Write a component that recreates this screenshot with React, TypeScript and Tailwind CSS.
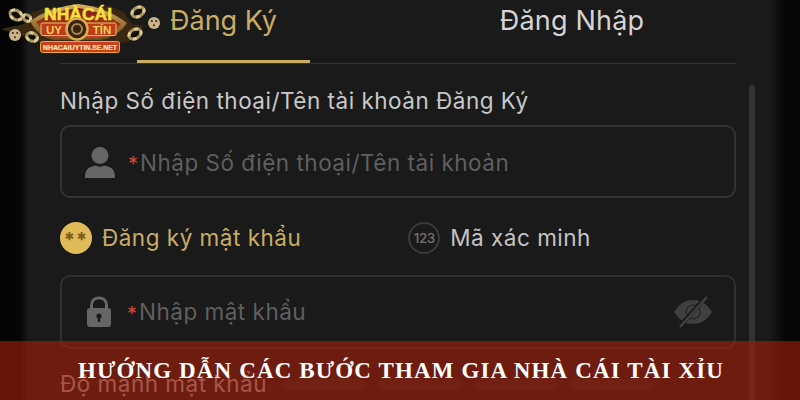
import React from "react";

function UserIcon() {
  return (
    <svg width="32" height="32" viewBox="0 0 32 32" className="shrink-0">
      <circle cx="16" cy="9.5" r="8.5" fill="#666666" />
      <path d="M1 32 C1 25 3 22 8 20.5 L12 19.5 C14 21 18 21 20 19.5 L24 20.5 C29 22 31 25 31 32 Z" fill="#666666" />
    </svg>
  );
}

function LockIcon() {
  return (
    <svg width="26" height="32" viewBox="0 0 26 32" className="shrink-0">
      <path d="M5.5 13 V9 C5.5 4.5 8.5 2 13 2 C17.5 2 20.5 4.5 20.5 9 V13" fill="none" stroke="#666666" strokeWidth="3" />
      <rect x="1" y="12" width="24" height="19" rx="3" fill="#666666" />
      <circle cx="13" cy="20" r="2.6" fill="#1a1a1a" />
      <rect x="11.8" y="20" width="2.4" height="6" fill="#1a1a1a" />
    </svg>
  );
}

function EyeOffIcon() {
  return (
    <svg width="40" height="32" viewBox="0 0 40 32" className="shrink-0">
      <path d="M1 16 C7 7 13 4 20 4 C27 4 33 7 39 16 C33 25 27 28 20 28 C13 28 7 25 1 16 Z" fill="#404040" />
      <circle cx="20" cy="16" r="7" fill="none" stroke="#2a2a2a" strokeWidth="1.5" />
      <path d="M33 1 L6 31" stroke="#1a1a1a" strokeWidth="4.5" />
      <path d="M34 1 L7 31" stroke="#404040" strokeWidth="2.5" />
    </svg>
  );
}

function Chip({ cx, cy, rx, ry, a }: { cx: number; cy: number; rx: number; ry: number; a: number }) {
  return (
    <g transform={`rotate(${a} ${cx} ${cy})`}>
      <ellipse cx={cx} cy={cy} rx={rx} ry={ry} fill="#141008" stroke="#a8955f" strokeWidth="3" />
      <ellipse cx={cx} cy={cy} rx={rx} ry={ry} fill="none" stroke="#dccb95" strokeWidth="3" strokeDasharray="4 5" />
    </g>
  );
}

function Die({ cx, cy }: { cx: number; cy: number }) {
  return (
    <g>
      <circle cx={cx} cy={cy} r="6" fill="#c9b48a" />
      <circle cx={cx - 2.2} cy={cy - 2} r="1" fill="#3a2410" />
      <circle cx={cx + 2.2} cy={cy - 2} r="1" fill="#3a2410" />
      <circle cx={cx} cy={cy + 2.2} r="1" fill="#3a2410" />
    </g>
  );
}

function Logo() {
  return (
    <svg width="164" height="56" viewBox="0 0 164 56">
      <defs>
        <linearGradient id="gold" x1="0" y1="0" x2="0" y2="1">
          <stop offset="0" stopColor="#d8b060" />
          <stop offset="1" stopColor="#6e4a18" />
        </linearGradient>
        <linearGradient id="red" x1="0" y1="0" x2="0" y2="1">
          <stop offset="0" stopColor="#7a2010" />
          <stop offset="1" stopColor="#c8401c" />
        </linearGradient>
      </defs>
      <path d="M1 29 L24 24 L32 12 L46 8 L110 6 L124 12 L132 24 L144 26 L128 42 L112 44 L44 44 L28 38 Z" fill="#3a2812" />
      <Chip cx={16} cy={15} rx={6.5} ry={4.5} a={30} />
      <Chip cx={27} cy={18} rx={4} ry={3} a={30} />
      <Chip cx={32} cy={37} rx={5.5} ry={4} a={20} />
      <Chip cx={138} cy={12} rx={6.5} ry={4.5} a={-30} />
      <Chip cx={135} cy={34} rx={6.5} ry={4.5} a={-30} />
      <Die cx={15} cy={35} />
      <Die cx={154} cy={23} />
      <path d="M30 21 Q50 7 78 4 Q106 7 127 23 Q118 37 100 40 L54 40 Q38 37 30 21 Z" fill="url(#gold)" />
      <path d="M36 22 Q56 10 78 8 Q100 10 121 24 Q112 35 98 38 L56 38 Q44 35 36 22 Z" fill="url(#red)" />
      <rect x="41" y="23" width="75" height="12.5" rx="1.5" fill="#c23a1c" stroke="#e8c468" />
      <text x="78" y="20" textAnchor="middle" fontFamily="'Liberation Sans', sans-serif" fontWeight="700" fontSize="16" fill="#f6e23a" stroke="#f6e23a" strokeWidth="0.5" textLength="68" lengthAdjust="spacingAndGlyphs">NHÀCÁI</text>
      <text x="54" y="34" textAnchor="middle" fontFamily="'Liberation Sans', sans-serif" fontWeight="700" fontSize="11.5" fill="#f2d05c">UY</text>
      <text x="102" y="34" textAnchor="middle" fontFamily="'Liberation Sans', sans-serif" fontWeight="700" fontSize="11.5" fill="#f2d05c">TÍN</text>
      <circle cx="77" cy="29" r="10.5" fill="#3a2410" stroke="#d8ac50" strokeWidth="2.5" />
      <circle cx="77" cy="29" r="5" fill="none" stroke="#a88a4c" strokeWidth="2" />
      <rect x="40.5" y="41.5" width="79" height="11" rx="2" fill="#c8401c" stroke="#e8a838" />
      <text x="80" y="50" textAnchor="middle" fontFamily="'Liberation Sans', sans-serif" fontWeight="700" fontSize="7.5" fill="#f8e8b0" stroke="#f8e8b0" strokeWidth="0.2" textLength="74" lengthAdjust="spacingAndGlyphs">NHACAIUYTIN.SE.NET</text>
    </svg>
  );
}

export default function App() {
  return (
    <div className="relative flex h-[400px] w-[800px] overflow-hidden bg-[#1a1a1a] font-['Inter','Noto_Sans',sans-serif]">
      <div className="h-full w-[28px] shrink-0 bg-gradient-to-r from-[#050505] from-70% to-[#1a1a1a]" />

      <div className="flex h-full min-w-0 flex-1 flex-col pl-[32px]">
        <div className="w-[676px] border-b border-[#333333]">
          <div className="flex h-[63px]">
            <div className="ml-[77px] flex h-[63px] w-[173px] justify-center border-b-[3px] border-[#c9ad62] pt-[1px]">
              <span className="text-[27px] leading-[40px] text-[#c9ad62]">Đăng Ký</span>
            </div>
            <div className="ml-[98px] flex w-[328px] justify-center pt-[1px]">
              <span className="text-[27px] leading-[40px] tracking-[0.2px] text-[#d4d4d4]">Đăng Nhập</span>
            </div>
          </div>
        </div>

        <p className="mt-[22px] text-[22.5px] leading-[30px] tracking-[0.5px] text-[#c8c8c8]">Nhập Số điện thoại/Tên tài khoản Đăng Ký</p>

        <div className="mt-[9px] flex h-[73px] w-[676px] shrink-0 items-center rounded-[10px] border-2 border-[#333333] pl-[22px]">
          <UserIcon />
          <span className="ml-[12px] mt-[4px] w-[12px] text-[20px] leading-none text-[#d9453a]">*</span>
          <span className="pt-[2px] text-[22.5px] tracking-[0.5px] text-[#5f5f5f]">Nhập Số điện thoại/Tên tài khoản</span>
        </div>

        <div className="mt-[23px] flex h-[34px] shrink-0 items-center">
          <div className="flex h-[32px] w-[32px] items-center justify-center rounded-full bg-[#e0bb5a] pt-[4px] text-[20px] font-bold leading-none tracking-[1px] text-[#7a5a18]">**</div>
          <span className="ml-[10px] text-[22.5px] tracking-[0.5px] text-[#c9ad62]">Đăng ký mật khẩu</span>
          <div className="ml-[107px] flex h-[32px] w-[32px] items-center justify-center rounded-full border-2 border-[#3a3a3a] text-[13.5px] font-medium tracking-[-0.5px] text-[#707070]">123</div>
          <span className="ml-[10px] text-[22.5px] tracking-[0.5px] text-[#c4c4c4]">Mã xác minh</span>
        </div>

        <div className="mt-[20px] flex h-[74px] w-[676px] shrink-0 items-center rounded-[10px] border-2 border-[#303030] pl-[24px] pr-[21px]">
          <LockIcon />
          <span className="ml-[15px] mt-[4px] w-[12px] text-[20px] leading-none text-[#d9453a]">*</span>
          <span className="text-[22.5px] tracking-[0.5px] text-[#5f5f5f]">Nhập mật khẩu</span>
          <div className="ml-auto">
            <EyeOffIcon />
          </div>
        </div>

        <div className="mt-[20px] flex shrink-0 items-center">
          <span className="text-[22.5px] leading-[30px] tracking-[0.5px] text-[#a8a8a8]">Độ mạnh mật khẩu</span>
          <div className="ml-[15px] flex gap-[12px]">
            <div className="h-[11px] w-[84px] rounded-full bg-[#242424]" />
            <div className="h-[11px] w-[84px] rounded-full bg-[#242424]" />
            <div className="h-[11px] w-[84px] rounded-full bg-[#242424]" />
            <div className="h-[11px] w-[84px] rounded-full bg-[#242424]" />
          </div>
        </div>
      </div>

      <div className="mr-[15px] mt-[85px] h-[315px] w-[6px] shrink-0 rounded-t-full bg-[#333333]" />
      <div className="h-full w-[30px] shrink-0 bg-gradient-to-r from-[#1a1a1a] to-[#060606] to-50%" />

      <div className="absolute left-0 top-0">
        <Logo />
      </div>

      <div className="absolute bottom-0 left-0 right-0 flex h-[59px] items-center justify-center bg-[#a71e0a]/60 pl-[2px] pt-[2px]">
        <span className="font-['Liberation_Serif',serif] text-[23px] font-bold tracking-[1.13px] text-white">
          HƯỚNG DẪN CÁC BƯỚC THAM GIA NHÀ CÁI TÀI XỈU
        </span>
      </div>
    </div>
  );
}
